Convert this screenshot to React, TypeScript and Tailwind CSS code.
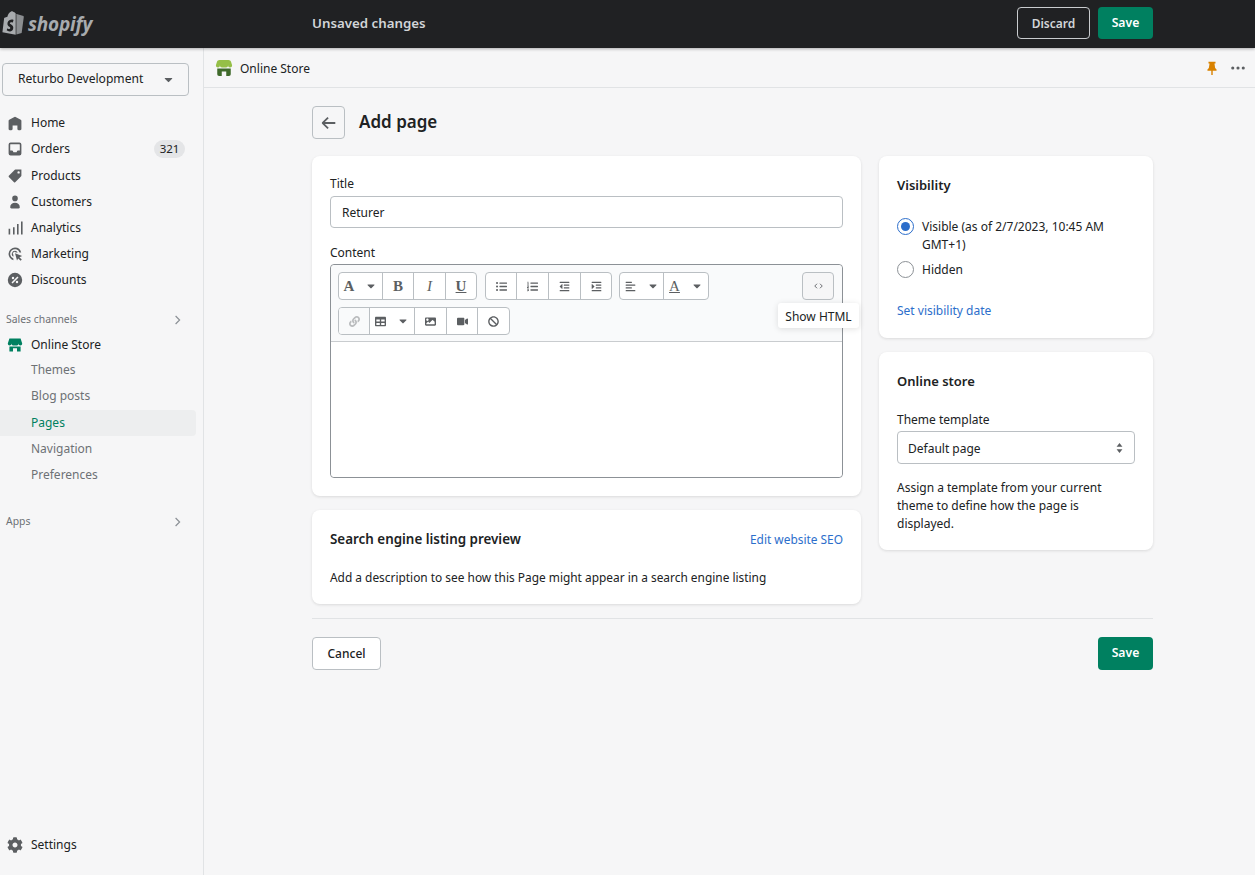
import { ReactNode } from "react";
import { FaListUl, FaListOl, FaOutdent, FaIndent, FaAlignLeft, FaLink, FaTable, FaImage, FaVideo, FaBan, FaCaretDown, FaCog } from "react-icons/fa";

const fontClass = "font-['Noto_Sans',sans-serif]";

function NavIcon({ children }: { children: ReactNode }) {
  return (
    <svg viewBox="0 0 20 20" className="w-[16px] h-[16px] fill-[#5c5f62] shrink-0">
      {children}
    </svg>
  );
}

const homeIcon = <path d="M18 7.261V17.5c0 .841-.672 1.5-1.5 1.5h-2c-.828 0-1.5-.659-1.5-1.5V13H7v4.477C7 18.318 6.328 19 5.500 19h-2c-.828 0-1.500-.682-1.500-1.523V7.261a1.500 1.500 0 0 1 .779-1.314l6.500-3.574a1.500 1.500 0 0 1 1.442 0l6.500 3.574c.48.264.779.767.779 1.314z" />;
const ordersIcon = <path fillRule="evenodd" d="M4.500 2A2.500 2.500 0 0 0 2 4.500v11A2.500 2.500 0 0 0 4.500 18h11a2.500 2.500 0 0 0 2.500-2.500v-11A2.500 2.500 0 0 0 15.500 2h-11zM4 4.500a.5.5 0 0 1 .5-.5h11a.5.5 0 0 1 .5.5V12h-2.500a1 1 0 0 0-.9.55L12 14H8l-.6-1.450A1 1 0 0 0 6.500 12H4V4.500z" />;
const productsIcon = <path fillRule="evenodd" d="M18 2h-7.500a1 1 0 0 0-.7.3l-7.500 7.500a1 1 0 0 0 0 1.400l6.500 6.500a1 1 0 0 0 1.400 0l7.500-7.500a1 1 0 0 0 .3-.7V2zm-3.500 5a1.500 1.500 0 1 1 0-3 1.500 1.500 0 0 1 0 3z" />;
const customersIcon = <path d="M10 9a3.500 3.500 0 1 0 0-7 3.500 3.500 0 0 0 0 7zm-6 7.500C4 13 6.500 11 10 11s6 2 6 5.500c0 1-.8 1.500-1.500 1.500h-9C4.800 18 4 17.500 4 16.500z" />;
const analyticsIcon = <path d="M2 11h2v7H2zM7.500 9h2v9h-2zM12.500 5h2v13h-2zM17.500 2h2v16h-2z" />;
const marketingIcon = <path fillRule="evenodd" d="M10 2a8 8 0 0 0-2 15.750v-2.100A6 6 0 1 1 15.650 8h2.100A8 8 0 0 0 10 2zm0 4a4 4 0 0 0-2 7.460v-2.500a2 2 0 1 1 2.960-2.960h2.500A4 4 0 0 0 10 6zm0 3l9 3.500-3.500 1.500 3 3-1.500 1.500-3-3L12.500 18 10 9z" />;
const discountsIcon = <path fillRule="evenodd" d="M10 1a9 9 0 1 0 0 18 9 9 0 0 0 0-18zM7.500 6a1.500 1.500 0 1 1 0 3 1.500 1.500 0 0 1 0-3zm5 5a1.500 1.500 0 1 1 0 3 1.500 1.500 0 0 1 0-3zM13 5.600l1.400 1.400L7 14.400 5.600 13 13 5.600z" />;

function NavRow({ icon, label, badge }: { icon: ReactNode; label: string; badge?: string }) {
  return (
    <div className="flex items-center pl-[7px] pr-[18px] h-[26.200px]">
      {icon}
      <span className="ml-[8px] text-[12px] text-[#202223]">{label}</span>
      {badge && <span className="ml-auto h-[18px] w-[31px] rounded-full bg-[#e4e5e7] text-[11.500px] leading-[18px] text-center text-[#202223]">{badge}</span>}
    </div>
  );
}

function SubRow({ label, active }: { label: string; active?: boolean }) {
  return (
    <div className={`flex items-center pl-[31px] h-[26.300px] w-[196px] rounded-r-[4px] text-[12px] ${active ? "bg-[#edeeef] text-[#008060]" : "text-[#6d7175]"}`}>
      {label}
    </div>
  );
}

function SectionLabel({ label }: { label: string }) {
  return (
    <div className="flex items-center justify-between pl-[6px] pr-[21px] h-[20px] text-[10.400px] text-[#6d7175]">
      <span>{label}</span>
      <svg viewBox="0 0 10 14" className="w-[8px] h-[12px] fill-none stroke-[#8c9196] stroke-[1.500]">
        <path d="M2 2l5 5-5 5" />
      </svg>
    </div>
  );
}

function Sidebar() {
  return (
    <aside className="w-[204px] shrink-0 border-r border-[#e1e3e5] flex flex-col pt-[15px] pb-[17px]">
      <div className="ml-[2px] w-[187px] h-[33px] rounded-[4px] border border-[#babfc3] bg-[#f6f6f7] flex items-center justify-between pl-[15px] pr-[13px] text-[12.100px] text-[#202223]">
        <span>Returbo Development</span>
        <FaCaretDown className="text-[#5c5f62] text-[13px]" />
      </div>
      <nav className="mt-[14.200px]">
        <NavRow icon={<NavIcon>{homeIcon}</NavIcon>} label="Home" />
        <NavRow icon={<NavIcon>{ordersIcon}</NavIcon>} label="Orders" badge="321" />
        <NavRow icon={<NavIcon>{productsIcon}</NavIcon>} label="Products" />
        <NavRow icon={<NavIcon>{customersIcon}</NavIcon>} label="Customers" />
        <NavRow icon={<NavIcon>{analyticsIcon}</NavIcon>} label="Analytics" />
        <NavRow icon={<NavIcon>{marketingIcon}</NavIcon>} label="Marketing" />
        <NavRow icon={<NavIcon>{discountsIcon}</NavIcon>} label="Discounts" />
      </nav>
      <div className="mt-[16px]">
        <SectionLabel label="Sales channels" />
        <div className="flex items-center pl-[7px] h-[31px]">
          <svg viewBox="0 0 20 20" className="w-[16px] h-[16px] fill-[#008060] shrink-0">
            <path d="M3 2h14l2 6c0 1.500-1 2.500-2.300 2.500S14.500 9.500 14.500 8c0 1.500-1 2.500-2.200 2.500h-4.600C6.500 10.500 5.500 9.500 5.500 8c0 1.500-1 2.500-2.200 2.500S1 9.500 1 8l2-6zM3 12h14v6h-4.500v-4h-5v4H3v-6z" />
          </svg>
          <span className="ml-[8px] text-[12px] text-[#202223]">Online Store</span>
        </div>
        <div className="-mt-[3.600px]">
          <SubRow label="Themes" />
          <SubRow label="Blog posts" />
          <SubRow label="Pages" active />
          <SubRow label="Navigation" />
          <SubRow label="Preferences" />
        </div>
      </div>
      <div className="mt-[23.500px]">
        <SectionLabel label="Apps" />
      </div>
      <div className="mt-auto">
        <NavRow icon={<FaCog className="w-[16px] h-[16px] text-[#5c5f62] shrink-0" />} label="Settings" />
      </div>
    </aside>
  );
}

function Cell({ children, w, disabled }: { children: ReactNode; w: string; disabled?: boolean }) {
  return (
    <div className={`${w} h-full flex items-center justify-center border-r last:border-r-0 border-[#babfc3] ${disabled ? "bg-[#f9fafb]" : ""}`}>
      <div className={`flex items-center ${disabled ? "opacity-40" : ""}`}>{children}</div>
    </div>
  );
}

function Caret() {
  return <FaCaretDown className="text-[#5c5f62] text-[12px] ml-[11px]" />;
}

function Group({ children }: { children: ReactNode }) {
  return <div className="flex h-[28px] rounded-[4px] border border-[#babfc3] bg-white overflow-hidden">{children}</div>;
}

const letter = "font-['Liberation_Serif',serif] text-[#5c5f62] text-[15px] leading-none";
const tool = "text-[#5c5f62] text-[11px]";

function Editor() {
  return (
    <div className="mt-[2px] h-[214px] border border-[#8c9196] rounded-[4px] flex flex-col overflow-visible">
      <div className="relative h-[77px] bg-[#f9fafb] rounded-t-[4px] border-b border-[#c9cccf] pl-[7px] pt-[7px]">
        <div className="flex">
          <Group>
            <Cell w="w-[44px]"><span className={`${letter} font-bold`}>A</span><Caret /></Cell>
            <Cell w="w-[31px]"><span className={`${letter} font-bold`}>B</span></Cell>
            <Cell w="w-[32px]"><span className={`${letter} italic`}>I</span></Cell>
            <Cell w="w-[30px]"><span className={`${letter} font-bold underline`}>U</span></Cell>
          </Group>
          <div className="ml-[8px]">
            <Group>
              <Cell w="w-[31px]"><FaListUl className={tool} /></Cell>
              <Cell w="w-[32px]"><FaListOl className={tool} /></Cell>
              <Cell w="w-[32px]"><FaOutdent className={tool} /></Cell>
              <Cell w="w-[30px]"><FaIndent className={tool} /></Cell>
            </Group>
          </div>
          <div className="ml-[7px]">
            <Group>
              <Cell w="w-[44px]"><FaAlignLeft className={tool} /><Caret /></Cell>
              <Cell w="w-[44px]"><span className={`${letter} underline text-[13px]`}>A</span><Caret /></Cell>
            </Group>
          </div>
          <div className="ml-auto mr-[8px] w-[32px] h-[28px] rounded-[4px] border border-[#babfc3] bg-[#f6f6f7] flex items-center justify-center">
            <svg viewBox="0 0 12 8" className="w-[9px] h-[6px] fill-none stroke-[#5c5f62] stroke-[1.200]">
              <path d="M4 1L1 4l3 3M8 1l3 3-3 3" />
            </svg>
          </div>
        </div>
        <div className="flex mt-[7px]">
          <Group>
            <Cell w="w-[31px]" disabled><FaLink className={tool} /></Cell>
            <Cell w="w-[45px]"><FaTable className={tool} /><Caret /></Cell>
            <Cell w="w-[32px]"><FaImage className={tool} /></Cell>
            <Cell w="w-[31px]"><FaVideo className={tool} /></Cell>
            <Cell w="w-[31px]"><FaBan className={tool} /></Cell>
          </Group>
        </div>
        <div className="absolute left-[447px] top-[38px] w-[81px] h-[25px] bg-white rounded-[3px] shadow-[0_1px_6px_rgba(0,0,0,0.12)] text-[12px] leading-[27px] text-center text-[#202223]">
          Show HTML
        </div>
      </div>
      <div className="flex-1 bg-white rounded-b-[4px]" />
    </div>
  );
}

const card = "bg-white rounded-[8px] shadow-[0_1px_3px_rgba(23,24,24,0.12)]";

export default function App() {
  return (
    <div className={`${fontClass} h-[875px] w-[1255px] bg-[#f6f6f7] flex flex-col overflow-hidden`}>
      <header className="relative z-10 h-[48px] shrink-0 bg-[#202123] shadow-[0_1px_3px_rgba(0,0,0,0.3)] flex items-center">
        <div className="w-[312px] flex items-center pl-[2px]">
          <svg viewBox="0 0 22 26" className="w-[22px] h-[25px] -mt-[2px] shrink-0">
            <path fill="#a8abae" d="M15 3.200l-.8.200C13.700 2 12.800 1 11.600 1 10.800 0 10 0 9 .4 6.800 1.300 5.600 4 5.200 6L2.200 7 1.800 7.300 0 22l13.800 2.600V3.100z" />
            <path fill="#8b8e91" d="M14.800 3.200L21 5l1 .1.200 1.400L20 23l-5.500 1.400V3.200z" />
            <path fill="#202123" d="M11.500 9.500l-.7 2.400s-.8-.4-1.700-.3c-1.400.1-1.400 1-1.400 1.200.1 1.200 3.400 1.500 3.600 4.400.1 2.300-1.200 3.800-3.200 4-2.300.1-3.600-1.200-3.600-1.200l.5-2.100s1.300 1 2.300.9c.7 0 .9-.6.9-1-.1-1.600-2.800-1.500-3-4.200-.1-2.200 1.300-4.500 4.500-4.700 1.200-.1 1.800.4 1.800.4z" />
          </svg>
          <span className="ml-[4px] font-['Open_Sans',sans-serif] italic font-bold text-[19px] leading-none -tracking-[0.2px] text-[#a8abae]">shopify</span>
        </div>
        <span className="text-[13.300px] font-semibold text-[#d2d5d8]">Unsaved changes</span>
        <div className="ml-auto mr-[102px] mb-[2px] flex gap-[8px]">
          <button className="h-[32px] w-[73px] pt-[1px] rounded-[4px] border border-[#c9cccf] text-[12px] font-semibold text-[#d2d5d8]">Discard</button>
          <button className="h-[32px] w-[55px] pt-[1px] rounded-[4px] bg-[#008060] text-[12.200px] font-semibold text-white">Save</button>
        </div>
      </header>
      <div className="flex flex-1 min-h-0">
        <Sidebar />
        <main className="flex-1 min-w-0">
          <div className="h-[40px] border-b border-[#e1e3e5] flex items-center pl-[11px] pr-[10px]">
            <svg viewBox="0 0 20 20" className="w-[18px] h-[18px] shrink-0">
              <path fill="#95bf47" d="M5 1h10c1.500 0 2.300.8 2.800 2L19 7c0 1.500-1 2.500-2.300 2.500S14.500 8.500 14.500 7c0 1.500-1 2.500-2.200 2.500h-4.600C6.500 9.500 5.500 8.500 5.500 7c0 1.500-1 2.500-2.200 2.500S1 8.500 1 7l1.200-4C2.700 1.800 3.500 1 5 1z" />
              <path fill="#3f6a2b" d="M2.500 10.500h15V17a2 2 0 0 1-2 2h-3v-5h-5v5h-3a2 2 0 0 1-2-2v-6.500z" />
            </svg>
            <span className="ml-[7px] mt-[3px] text-[12px] text-[#202223]">Online Store</span>
            <svg viewBox="0 0 20 20" className="ml-auto w-[14px] h-[14px] fill-[#d98200]">
              <path d="M5 1h10v2.500h-1.500l1 6.500 2 2v2h-5.500V20H9v-6H3.500v-2l2-2 1-6.500H5V1z" />
            </svg>
            <svg viewBox="0 0 16 4" className="ml-[12px] w-[14px] h-[4px] fill-[#5c5f62]">
              <circle cx="2" cy="2" r="1.800" />
              <circle cx="8" cy="2" r="1.800" />
              <circle cx="14" cy="2" r="1.800" />
            </svg>
          </div>
          <div className="ml-[108px] w-[841px]">
            <div className="mt-[18px] flex items-center h-[33px]">
              <button className="w-[33px] h-[33px] rounded-[4px] border border-[#babfc3] flex items-center justify-center">
                <svg viewBox="0 0 20 20" className="w-[18px] h-[18px] fill-[#5c5f62]">
                  <path d="M17 9H5.400l4.300-4.300-1.400-1.400-6 6a1 1 0 0 0 0 1.400l6 6 1.400-1.400L5.400 11H17V9z" />
                </svg>
              </button>
              <h1 className="ml-[14px] -mt-[1px] text-[17px] font-semibold text-[#202223]">Add page</h1>
            </div>
            <div className="mt-[17px] flex gap-[18px] items-start">
              <div className="w-[549px] flex flex-col gap-[14px]">
                <section className={`${card} h-[340px] px-[18px] pt-[19px]`}>
                  <div className="text-[12px] leading-[18px] text-[#202223]">Title</div>
                  <div className="mt-[3px] h-[32px] border border-[#babfc3] rounded-[4px] px-[11px] text-[12px] leading-[31px] text-[#202223]">Returer</div>
                  <div className="mt-[16px] text-[12px] leading-[18px] text-[#202223]">Content</div>
                  <Editor />
                </section>
                <section className={`${card} h-[94px] px-[18px] pt-[18px]`}>
                  <div className="flex items-center justify-between h-[22px]">
                    <h2 className="text-[13.400px] font-semibold text-[#202223]">Search engine listing preview</h2>
                    <a className="text-[11.900px] mt-[2px] text-[#2c6ecb]">Edit website SEO</a>
                  </div>
                  <p className="mt-[19px] text-[11.900px] text-[#202223]">Add a description to see how this Page might appear in a search engine listing</p>
                </section>
              </div>
              <div className="w-[274px] flex flex-col gap-[14px]">
                <section className={`${card} h-[182px] px-[18px] pt-[18px]`}>
                  <h2 className="h-[22px] text-[13px] leading-[22px] font-semibold text-[#202223]">Visibility</h2>
                  <div className="mt-[21px] flex gap-[8px]">
                    <span className="mt-[1px] w-[17px] h-[17px] rounded-full border border-[#2c6ecb] flex items-center justify-center shrink-0">
                      <span className="w-[9px] h-[9px] rounded-full bg-[#2c6ecb]" />
                    </span>
                    <span className="text-[12px] leading-[18px] mt-[1px] text-[#202223]">Visible (as of 2/7/2023, 10:45 AM GMT+1)</span>
                  </div>
                  <div className="mt-[6px] flex gap-[8px]">
                    <span className="mt-[1px] w-[17px] h-[17px] rounded-full border border-[#8c9196] shrink-0" />
                    <span className="text-[12px] leading-[18px] mt-[1px] text-[#202223]">Hidden</span>
                  </div>
                  <a className="block mt-[23px] text-[12px] leading-[18px] text-[#2c6ecb]">Set visibility date</a>
                </section>
                <section className={`${card} h-[198px] px-[18px] pt-[18px]`}>
                  <h2 className="h-[22px] text-[13px] leading-[22px] font-semibold text-[#202223]">Online store</h2>
                  <div className="mt-[19px] text-[12px] leading-[18px] text-[#202223]">Theme template</div>
                  <div className="mt-[2px] h-[33px] border border-[#babfc3] rounded-[4px] flex items-center justify-between pl-[10px] pr-[11px] text-[12px] text-[#202223]">
                    <span className="mt-[2px]">Default page</span>
                    <svg viewBox="0 0 8 12" className="w-[7px] h-[10px] fill-[#5c5f62]">
                      <path d="M4 0l3.500 4.500h-7L4 0zM4 12L.5 7.500h7L4 12z" />
                    </svg>
                  </div>
                  <p className="mt-[15px] text-[12px] leading-[18px] text-[#202223]">Assign a template from your current theme to define how the page is displayed.</p>
                </section>
              </div>
            </div>
            <div className="mt-[14px] border-t border-[#e1e3e5] pt-[18px] flex justify-between">
              <button className="h-[33px] w-[69px] rounded-[4px] border border-[#babfc3] bg-white text-[12px] font-medium text-[#202223]">Cancel</button>
              <button className="h-[33px] w-[55px] rounded-[4px] bg-[#008060] text-[12.200px] font-semibold text-white">Save</button>
            </div>
          </div>
        </main>
      </div>
    </div>
  );
}
